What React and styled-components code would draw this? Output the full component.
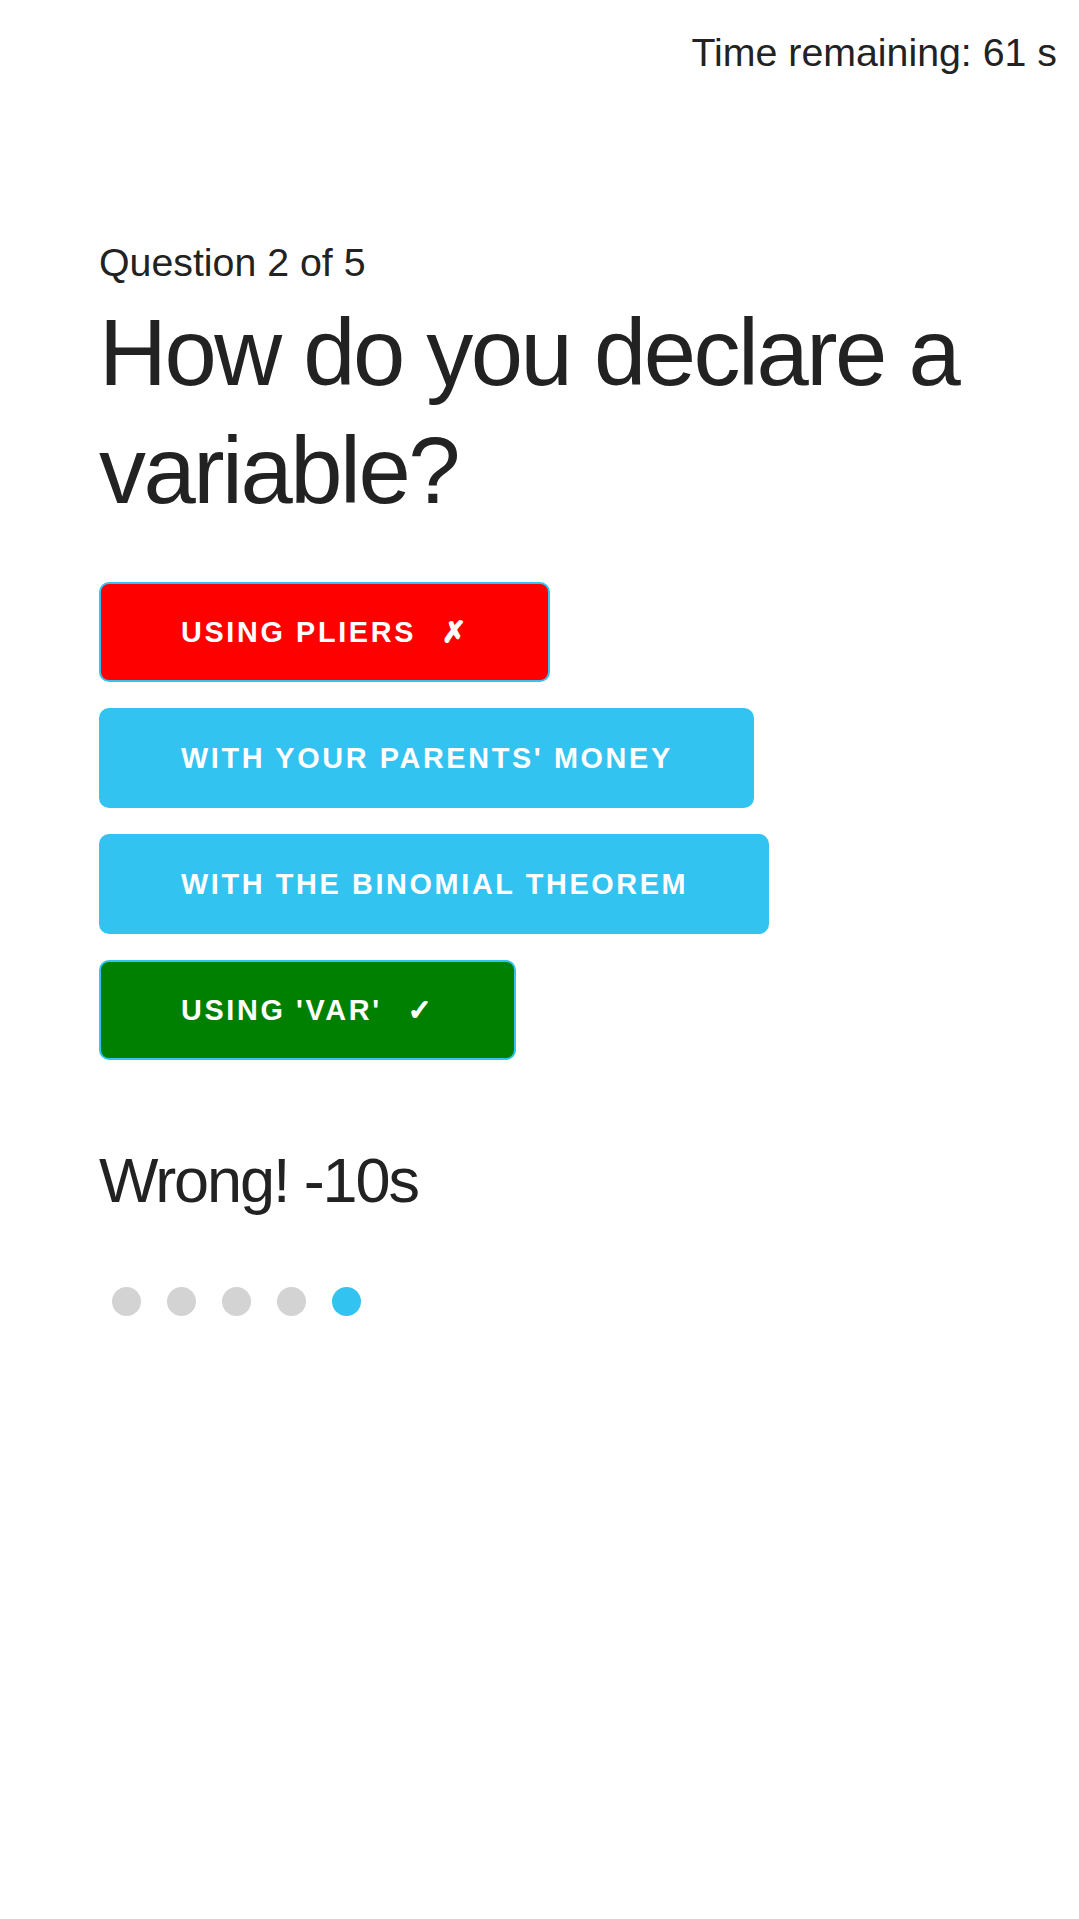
import React from "react";
import styled, { createGlobalStyle } from "styled-components";

const GlobalStyle = createGlobalStyle`
	html, body {
		margin: 0;
		padding: 0;
		background: #fff;
	}
	body {
		font-family: "Liberation Sans", Arial, Helvetica, sans-serif;
		font-size: 39.3px;
		line-height: 1.6;
		color: #222;
	}
`;

const Page = styled.div`
	min-height: 1919px;
`;

const Header = styled.header`
	display: flex;
	justify-content: flex-end;
	padding: 21px 22px 0;
	height: 63px;
	line-height: 63px;
`;

const Main = styled.main`
	padding: 0 0 0 99px;
	margin-top: 147px;
	max-width: 900px;
`;

const Counter = styled.p`
	margin: 0;
	line-height: 63px;
`;

const Question = styled.h2`
	margin: 0 0 52px;
	font-size: 94px;
	font-weight: 400;
	line-height: 118px;
	letter-spacing: -2.5px;
`;

const Answers = styled.div`
	display: flex;
	flex-direction: column;
	align-items: flex-start;
	gap: 26px;
`;

const colors = {
	wrong: "#ff0000",
	right: "#008000",
	idle: "#33c3f0",
};

const Answer = styled.button`
	height: 100px;
	padding: 0 79px 0 80px;
	border: 2px solid #33c3f0;
	border-radius: 10px;
	background: ${(p) => colors[p.$state]};
	color: #fff;
	font-family: "Liberation Sans", Arial, Helvetica, sans-serif;
	font-size: 28.8px;
	font-weight: 700;
	letter-spacing: 2.65px;
	text-transform: uppercase;
	white-space: nowrap;
	cursor: pointer;
`;

const Mark = styled.span`
	margin-left: 26px;
	font-family: "DejaVu Sans", sans-serif;
	font-weight: 700;
	-webkit-text-stroke: 1.6px #fff;
`;

const Feedback = styled.h4`
	margin: 78px 0 0;
	font-size: 63px;
	font-weight: 400;
	line-height: 85px;
	letter-spacing: -2.1px;
`;

const Dots = styled.div`
	display: flex;
	margin-top: 64px;
`;

const Dot = styled.span`
	width: 29px;
	height: 29px;
	margin: 0 13px;
	border-radius: 50%;
	background: ${(p) => (p.$active ? "#33c3f0" : "#d3d3d3")};
`;

const answers = [
	{ text: "Using pliers", state: "wrong", mark: "✗" },
	{ text: "With your parents' money", state: "idle" },
	{ text: "With the binomial theorem", state: "idle" },
	{ text: "Using 'var'", state: "right", mark: "✓" },
];

const App = () => {
	return (
		<Page>
			<GlobalStyle />
			<Header>Time remaining: 61 s</Header>
			<Main>
				<Counter>Question 2 of 5</Counter>
				<Question>How do you declare a variable?</Question>
				<Answers>
					{answers.map((a) => (
						<Answer key={a.text} $state={a.state}>
							{a.text}
							{a.mark && <Mark>{a.mark}</Mark>}
						</Answer>
					))}
				</Answers>
				<Feedback>Wrong! -10s</Feedback>
				<Dots>
					{[0, 1, 2, 3, 4].map((i) => (
						<Dot key={i} $active={i === 4} />
					))}
				</Dots>
			</Main>
		</Page>
	);
};

export default App;
